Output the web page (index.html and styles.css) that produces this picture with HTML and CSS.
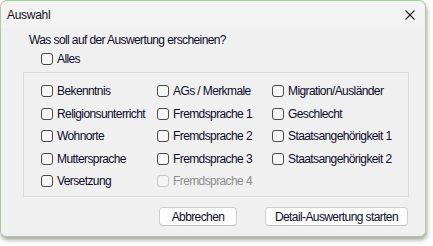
FILE: index.html
```html
<!DOCTYPE html>
<html lang="de">
<head>
<meta charset="utf-8">
<title>Auswahl</title>
<link rel="stylesheet" href="styles.css">
</head>
<body>
<div class="window">
  <div class="titlebar">
    <span class="title">Auswahl</span>
    <svg class="close" width="10" height="10" viewBox="0 0 10 10"><path d="M0.5 0.5 L9.5 9.5 M9.5 0.5 L0.5 9.5" stroke="#1a1a1a" stroke-width="1.1" fill="none"/></svg>
  </div>
  <div class="content">
    <div class="question">Was soll auf der Auswertung erscheinen?</div>
    <label class="item alles"><span class="box"></span><span>Alles</span></label>
    <div class="group">
      <label class="item"><span class="box"></span><span>Bekenntnis</span></label>
      <label class="item"><span class="box"></span><span>AGs / Merkmale</span></label>
      <label class="item"><span class="box"></span><span>Migration/Ausländer</span></label>
      <label class="item"><span class="box"></span><span>Religionsunterricht</span></label>
      <label class="item"><span class="box"></span><span>Fremdsprache 1</span></label>
      <label class="item"><span class="box"></span><span>Geschlecht</span></label>
      <label class="item"><span class="box"></span><span>Wohnorte</span></label>
      <label class="item"><span class="box"></span><span>Fremdsprache 2</span></label>
      <label class="item"><span class="box"></span><span>Staatsangehörigkeit 1</span></label>
      <label class="item"><span class="box"></span><span>Muttersprache</span></label>
      <label class="item"><span class="box"></span><span>Fremdsprache 3</span></label>
      <label class="item"><span class="box"></span><span>Staatsangehörigkeit 2</span></label>
      <label class="item"><span class="box"></span><span>Versetzung</span></label>
      <label class="item disabled"><span class="box"></span><span>Fremdsprache 4</span></label>
    </div>
    <div class="buttons">
      <button class="btn btn-cancel">Abbrechen</button>
      <button class="btn btn-start">Detail-Auswertung starten</button>
    </div>
  </div>
</div>
</body>
</html>
```
FILE: styles.css
```css
html, body {
  margin: 0;
  padding: 0;
  background: #ffffff;
}
body {
  font-family: "Liberation Sans", Arial, sans-serif;
  font-size: 12px;
  letter-spacing: -0.6px;
  color: #0c0c28;
  width: 433px;
  height: 246px;
  overflow: hidden;
}
.window {
  box-sizing: border-box;
  width: 426px;
  height: 237px;
  background: #f0f0f0;
  border: 1px solid #b7c4ad;
  border-top-color: #9ccf8e;
  border-radius: 7px 7px 6px 6px;
  box-shadow: 1px 3px 4px rgba(60, 60, 40, 0.45);
  display: flex;
  flex-direction: column;
}
.titlebar {
  height: 27px;
  display: flex;
  align-items: center;
  justify-content: space-between;
  background: #f3f3f4;
  border-radius: 7px 7px 0 0;
  padding: 0 10px 0 6px;
}
.title {
  color: #111;
  line-height: 16px;
  padding-top: 1px;
  letter-spacing: -0.3px;
}
.close {
  display: block;
  margin-top: 1px;
}
.content {
  padding: 4px 0 0 22px;
  display: flex;
  flex-direction: column;
}
.question {
  line-height: 16px;
  margin-left: 6px;
}
.item {
  display: flex;
  align-items: center;
  gap: 4px;
  line-height: 16px;
  white-space: nowrap;
}
.alles {
  margin-top: 3px;
  margin-left: 18px;
  height: 16px;
}
.box {
  box-sizing: border-box;
  width: 12px;
  height: 12px;
  border: 1px solid #4a4a4a;
  border-radius: 3px;
  background: #f6f6f6;
  flex: none;
}
.group {
  box-sizing: border-box;
  margin-top: 5px;
  width: 386px;
  height: 125px;
  border: 1px solid #dcdcdc;
  padding: 7px 0 0 17px;
  display: grid;
  grid-template-columns: 116px 115px auto;
  grid-auto-rows: 22.5px;
}
.disabled {
  color: #8d8d8d;
}
.disabled .box {
  border-color: #c9c9c9;
  background: #f3f3f3;
}
.buttons {
  width: 386px;
  margin-top: 10px;
  display: flex;
  justify-content: flex-end;
  gap: 28px;
  padding-right: 1px;
  box-sizing: border-box;
}
.btn {
  box-sizing: border-box;
  height: 19px;
  font-family: "Liberation Sans", Arial, sans-serif;
  font-size: 12px;
  letter-spacing: -0.6px;
  color: #0c0c28;
  background: #fdfdfd;
  border: 1px solid #d0d0d0;
  border-bottom-color: #c0c0c0;
  border-radius: 4px;
  padding: 0;
  line-height: 16px;
}
.btn-cancel {
  width: 78px;
}
.btn-start {
  width: 143px;
}
```
